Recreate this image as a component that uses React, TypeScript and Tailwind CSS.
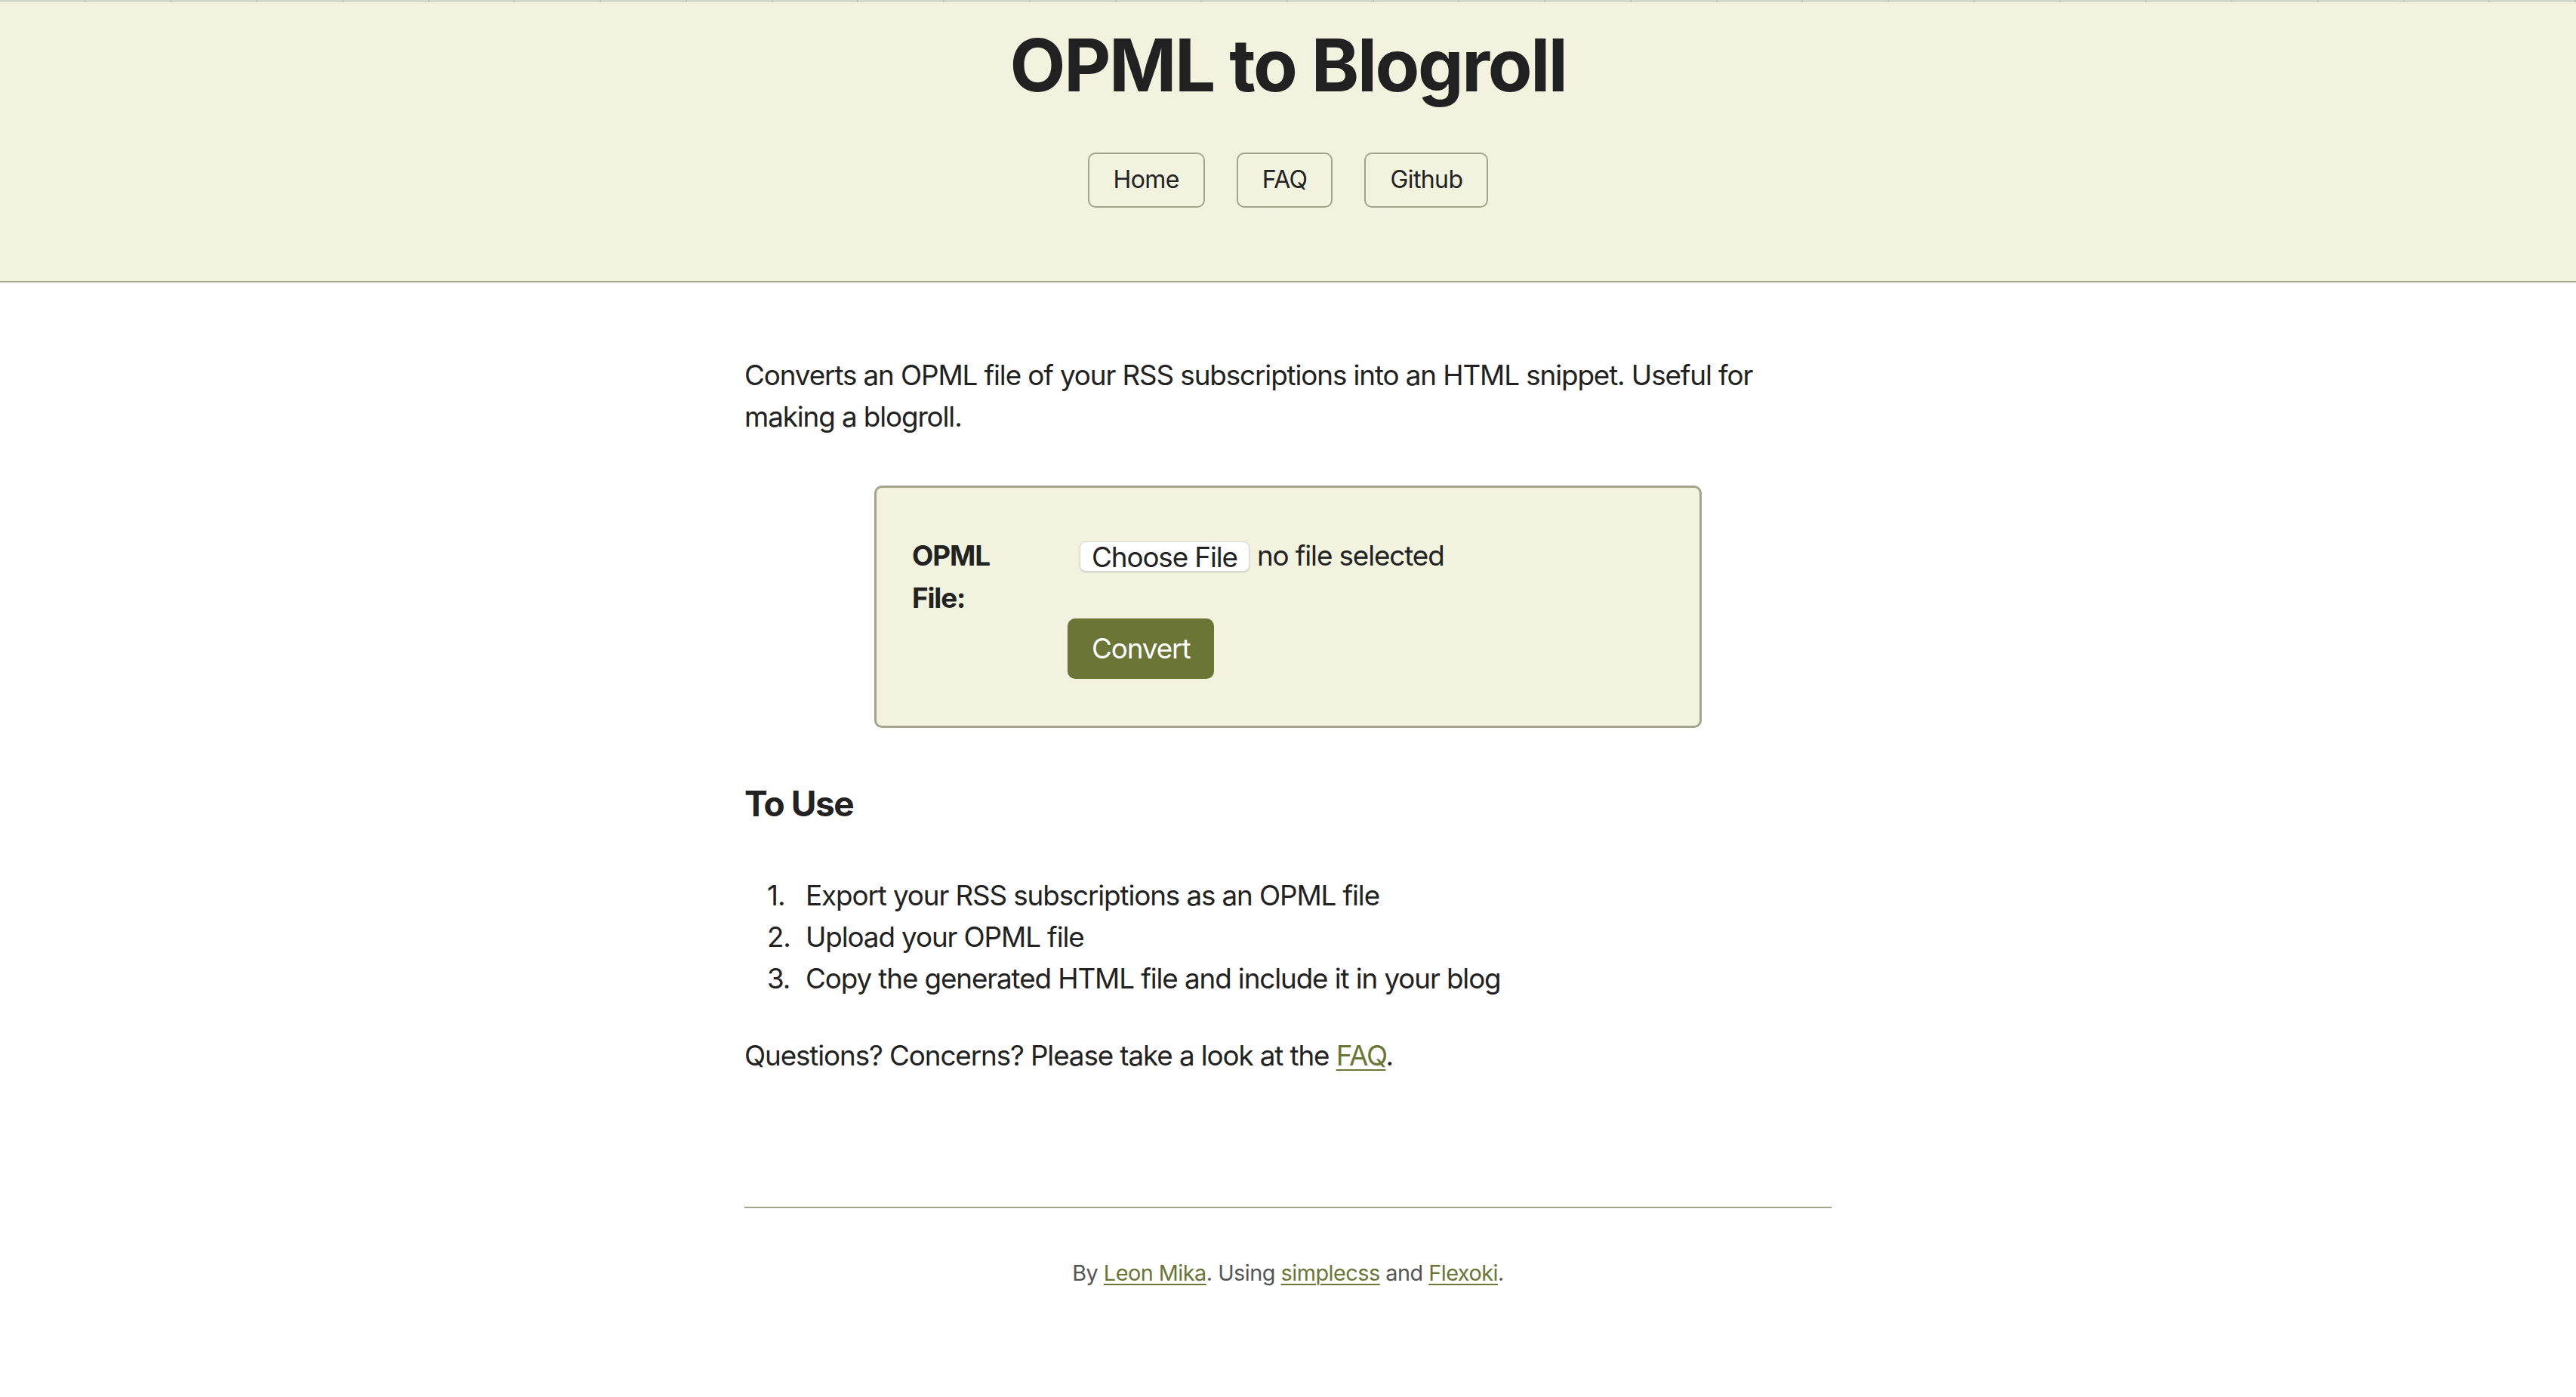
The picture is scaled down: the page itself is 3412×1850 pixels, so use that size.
import React from "react";

const font = { fontFamily: 'Inter, "Noto Sans", sans-serif' };

export default function App() {
  const ticks = Array.from({ length: 30 });
  return (
    <div className="min-h-[1850px] bg-white text-[#222222]" style={font}>
      <header className="h-[374px] border-b-2 border-[#a2a58c] bg-[#f1f3df] flex flex-col items-center">
        <div className="w-full h-[3px] bg-[#d7d7d2] flex">
          {ticks.map((_, i) => (
            <div key={i} className="flex-1 border-r-2 border-[#c4c4c0]" />
          ))}
        </div>
        <h1 className="mt-[31px] text-[96px] leading-[105.6px] font-bold text-[#212121] tracking-[-2.4px]">
          OPML to Blogroll
        </h1>
        <nav className="mt-[62px] flex gap-[42px] text-[32px] leading-[64px] tracking-[-0.6px]">
          {["Home", "FAQ", "Github"].map((t) => (
            <a
              key={t}
              className="h-[73px] px-[32px] flex items-center border-2 border-[#a2a58c] rounded-[10px] text-[#222222]"
            >
              {t}
            </a>
          ))}
        </nav>
      </header>

      <main className="w-[1440px] mx-auto text-[36.8px] leading-[55.2px] tracking-[-1.1px]">
        <p className="mt-[95px]">
          Converts an OPML file of your RSS subscriptions into an HTML snippet. Useful for making a blogroll.
        </p>

        <div className="mt-[64px] mx-auto w-[1096px] border-[3px] border-[#a2a58c] rounded-[10px] bg-[#f1f3df] pt-[62px] pb-[62px] pl-[47px] grid grid-cols-[206px_1fr]">
          <label className="font-bold w-[170px]">OPML File:</label>
          <div className="flex items-start">
            <div className="ml-[16px] mt-[9px] h-[40px] px-[15px] flex items-center bg-white rounded-[8px] border border-[#d6d6d6] shadow-[0_1px_2px_rgba(0,0,0,0.15)] text-[36.8px]">
              Choose File
            </div>
            <span className="ml-[10px]">no file selected</span>
          </div>
          <div />
          <div>
            <button className="h-[80px] px-[32px] rounded-[10px] bg-[#6b7536] text-white text-[36.8px] leading-[55.2px] tracking-[-1.1px]">
              Convert
            </button>
          </div>
        </div>

        <h4 className="mt-[73px] text-[46px] leading-[55.2px] font-bold tracking-[-1.5px]">To Use</h4>

        <ol className="mt-[66px] pl-[30px]">
          {[
            "Export your RSS subscriptions as an OPML file",
            "Upload your OPML file",
            "Copy the generated HTML file and include it in your blog",
          ].map((t, i) => (
            <li key={i} className="flex">
              <span className="w-[51px]">{i + 1}.</span>
              <span>{t}</span>
            </li>
          ))}
        </ol>

        <p className="mt-[46px]">
          Questions? Concerns? Please take a look at the{" "}
          <a className="text-[#6b7536] underline decoration-2 underline-offset-[5px]">FAQ</a>.
        </p>

        <footer className="mt-[173px] border-t-2 border-[#a2a58c] pt-[64px] text-center text-[28.8px] leading-[43.2px] text-[#555555] tracking-[-0.5px]">
          By <a className="text-[#6b7536] underline decoration-2 underline-offset-[4px]">Leon Mika</a>. Using{" "}
          <a className="text-[#6b7536] underline decoration-2 underline-offset-[4px]">simplecss</a> and{" "}
          <a className="text-[#6b7536] underline decoration-2 underline-offset-[4px]">Flexoki</a>.
        </footer>
      </main>
    </div>
  );
}
